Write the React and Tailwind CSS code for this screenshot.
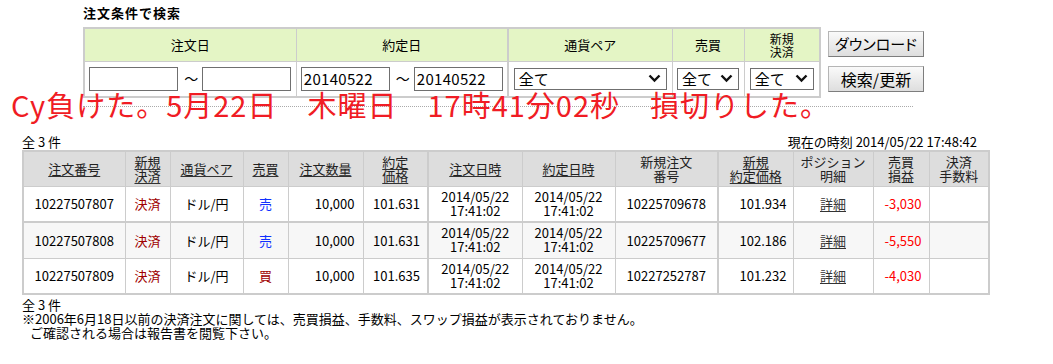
import React from "react";

const F = { fontFamily: "'Noto Sans CJK JP', 'Noto Sans', sans-serif" };

function Chevron() {
  return (
    <svg width="13" height="9" viewBox="0 0 13 9" className="shrink-0">
      <path d="M1.5 1.5 L6.5 6.5 L11.5 1.5" fill="none" stroke="#111" strokeWidth="2.4" />
    </svg>
  );
}

function FakeSelect({ w }) {
  return (
    <div
      className={`flex items-center justify-between h-[22px] border border-[#6f6f6f] bg-white pl-[4px] pr-[5px] text-[15px] leading-[20px] text-black ${w}`}
    >
      <span>全て</span>
      <Chevron />
    </div>
  );
}

function DateInput({ v }) {
  return (
    <div className="w-[89px] h-[24px] border border-[#6f6f6f] bg-white text-[15px] leading-[22px] pl-[2px] text-black tracking-[0.3px]">
      {v}
    </div>
  );
}

const cols = [102, 45, 73, 45, 75, 65, 94, 93, 103, 75, 80, 56, 60];

const heads = [
  { t: ["注文番号"], u: true },
  { t: ["新規", "決済"], u: true },
  { t: ["通貨ペア"], u: true },
  { t: ["売買"], u: true },
  { t: ["注文数量"], u: true },
  { t: ["約定", "価格"], u: true },
  { t: ["注文日時"], u: true, thick: true },
  { t: ["約定日時"], u: true },
  { t: ["新規注文", "番号"], u: false },
  { t: ["新規", "約定価格"], u: true, thick: true },
  { t: ["ポジション", "明細"], u: false },
  { t: ["売買", "損益"], u: false },
  { t: ["決済", "手数料"], u: false },
];

const rows = [
  { no: "10227507807", side: "売", qty: "10,000", price: "101.631", newNo: "10225709678", newPrice: "101.934", pl: "-3,030", bg: "bg-white" },
  { no: "10227507808", side: "売", qty: "10,000", price: "101.631", newNo: "10225709677", newPrice: "102.186", pl: "-5,550", bg: "bg-[#f7f7f7]" },
  { no: "10227507809", side: "買", qty: "10,000", price: "101.635", newNo: "10227252787", newPrice: "101.232", pl: "-4,030", bg: "bg-white" },
];

function DateCell({ thick }) {
  return (
    <td className={`border border-[#cccccc] text-center leading-[14px] ${thick ? "border-l-2" : ""}`}>
      <div>2014/05/22</div>
      <div>17:41:02</div>
    </td>
  );
}

export default function App() {
  return (
    <div className="relative w-[1053px] h-[364px] bg-white text-[#222] overflow-hidden" style={F}>
      {/* search section */}
      <div className="pl-[83px] pt-[5px]">
        <div className="h-[16px] text-[13px] leading-[16px] font-bold tracking-[1px] text-black">注文条件で検索</div>
        <div className="flex mt-[6px]">
          <table className="border-collapse border-2 border-[#cccccc] table-fixed w-[736px] text-black">
            <colgroup>
              <col style={{ width: 212 }} />
              <col style={{ width: 212 }} />
              <col style={{ width: 164 }} />
              <col style={{ width: 72 }} />
              <col style={{ width: 76 }} />
            </colgroup>
            <thead>
              <tr className="h-[33px] bg-[#e4f5c5]">
                <th className="border border-[#cccccc] font-normal text-[13px]">注文日</th>
                <th className="border border-[#cccccc] font-normal text-[13px]">約定日</th>
                <th className="border border-[#cccccc] border-l-2 font-normal text-[13px]">通貨ペア</th>
                <th className="border border-[#cccccc] font-normal text-[13px]">売買</th>
                <th className="border border-[#cccccc] font-normal text-[12px] leading-[13px]">
                  <div>新規</div>
                  <div>決済</div>
                </th>
              </tr>
            </thead>
            <tbody>
              <tr className="h-[36px]">
                <td className="border border-[#cccccc]">
                  <div className="flex items-center justify-center gap-[6px]">
                    <DateInput v="" />
                    <span className="text-[14px] w-[12px] text-center">〜</span>
                    <DateInput v="" />
                  </div>
                </td>
                <td className="border border-[#cccccc]">
                  <div className="flex items-center justify-center gap-[6px]">
                    <DateInput v="20140522" />
                    <span className="text-[14px] w-[12px] text-center">〜</span>
                    <DateInput v="20140522" />
                  </div>
                </td>
                <td className="border border-[#cccccc] border-l-2">
                  <div className="flex justify-center">
                    <FakeSelect w="w-[153px]" />
                  </div>
                </td>
                <td className="border border-[#cccccc]">
                  <div className="flex justify-center">
                    <FakeSelect w="w-[62px]" />
                  </div>
                </td>
                <td className="border border-[#cccccc]">
                  <div className="flex justify-center">
                    <FakeSelect w="w-[64px]" />
                  </div>
                </td>
              </tr>
            </tbody>
          </table>
          <div className="flex flex-col ml-[7px] pt-[4px] gap-[9px]">
            <div className="w-[96px] h-[26px] flex items-center justify-center border border-[#b5b5b5] border-b-[#7d7d7d] border-r-[#7d7d7d] bg-gradient-to-b from-[#fafafa] to-[#dedede] text-[15px] leading-[16px] text-black [font-feature-settings:'palt']">
              ダウンロード
            </div>
            <div className="w-[96px] h-[26px] flex items-center justify-center border border-[#b5b5b5] border-b-[#7d7d7d] border-r-[#7d7d7d] bg-gradient-to-b from-[#fafafa] to-[#dedede] text-[16px] leading-[16px] text-black">
              検索/更新
            </div>
          </div>
        </div>
        <div className="mt-[8px] w-[830px] border-b border-dotted border-[#aaaaaa]" />
      </div>

      {/* red annotation overlay */}
      <div className="absolute left-[11px] top-[90px] text-[29px] leading-[29px] tracking-[1px] whitespace-nowrap text-[#f01c24]">
        Cy負けた。5月22日　木曜日　17時41分02秒　損切りした。
      </div>

      {/* results */}
      <div className="pl-[22px] mt-[26px] text-[13px]">
        <div className="flex justify-between items-end w-[966px] pr-[11px] h-[16px] leading-[15px] text-black">
          <span>全 3 件</span>
          <span>現在の時刻 2014/05/22 17:48:42</span>
        </div>
        <table className="border-collapse border-2 border-[#cccccc] table-fixed w-[966px] mt-[1px] text-[13px] text-black">
          <colgroup>
            {cols.map((w, i) => (
              <col key={i} style={{ width: w }} />
            ))}
          </colgroup>
          <thead>
            <tr className="h-[35px] bg-[#dddddd]">
              {heads.map((h, i) => (
                <th
                  key={i}
                  className={`border border-[#cccccc] font-normal leading-[14px] text-[#222] ${h.thick ? "border-l-2" : ""}`}
                >
                  <span className={h.u ? "underline underline-offset-[2px] decoration-[#333]" : ""}>
                    {h.t.map((l, j) => (
                      <span key={j} className="block">
                        {l}
                      </span>
                    ))}
                  </span>
                </th>
              ))}
            </tr>
          </thead>
          <tbody>
            {rows.map((r, i) => (
              <tr key={i} className={`h-[36px] ${r.bg} ${i === 1 ? "border-t-2 border-[#cccccc]" : ""}`}>
                <td className="border border-[#cccccc] text-center">{r.no}</td>
                <td className="border border-[#cccccc] text-center text-[#a00000]">決済</td>
                <td className="border border-[#cccccc] text-center">ドル/円</td>
                <td className={`border border-[#cccccc] text-center ${r.side === "売" ? "text-[#1030ff]" : "text-[#a00000]"}`}>{r.side}</td>
                <td className="border border-[#cccccc] text-right pr-[8px]">{r.qty}</td>
                <td className="border border-[#cccccc] text-right pr-[7px]">{r.price}</td>
                <DateCell thick />
                <DateCell />
                <td className="border border-[#cccccc] text-center">{r.newNo}</td>
                <td className="border border-[#cccccc] border-l-2 text-right pr-[6px]">{r.newPrice}</td>
                <td className="border border-[#cccccc] text-center">
                  <span className="underline underline-offset-[2px] text-[#333]">詳細</span>
                </td>
                <td className="border border-[#cccccc] text-right pr-[7px] text-[#ff0000]">{r.pl}</td>
                <td className="border border-[#cccccc]"></td>
              </tr>
            ))}
          </tbody>
        </table>
        <div className="mt-[3px] leading-[14px] text-black">
          <div>全 3 件</div>
          <div>※2006年6月18日以前の決済注文に関しては、売買損益、手数料、スワップ損益が表示されておりません。</div>
          <div className="pl-[8px]">ご確認される場合は報告書を閲覧下さい。</div>
        </div>
      </div>
    </div>
  );
}
